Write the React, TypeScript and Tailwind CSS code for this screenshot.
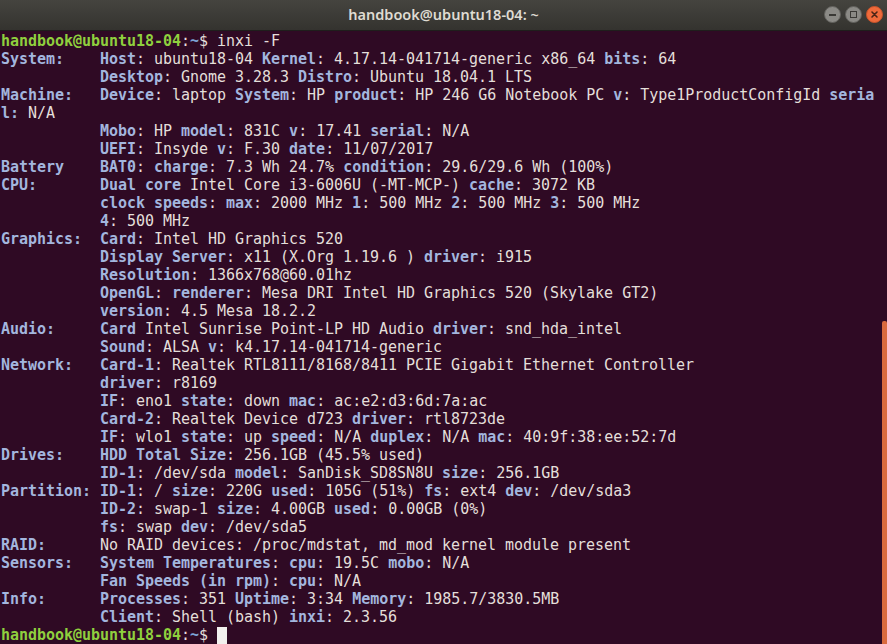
import React from 'react'

// *label* marks bold blue spans, the rest is plain output text
const LINES: string[] = [
  '*System:*    *Host:* ubuntu18-04 *Kernel:* 4.17.14-041714-generic x86_64 *bits:* 64',
  '           *Desktop:* Gnome 3.28.3 *Distro:* Ubuntu 18.04.1 LTS',
  '*Machine:*   *Device:* laptop *System:* HP *product:* HP 246 G6 Notebook PC *v:* Type1ProductConfigId *seria*',
  '*l:* N/A',
  '           *Mobo:* HP *model:* 831C *v:* 17.41 *serial:* N/A',
  '           *UEFI:* Insyde *v:* F.30 *date:* 11/07/2017',
  '*Battery*    *BAT0:* *charge:* 7.3 Wh 24.7% *condition:* 29.6/29.6 Wh (100%)',
  '*CPU:*       *Dual core* Intel Core i3-6006U (-MT-MCP-) *cache:* 3072 KB',
  '           *clock speeds:* *max:* 2000 MHz *1:* 500 MHz *2:* 500 MHz *3:* 500 MHz',
  '           *4:* 500 MHz',
  '*Graphics:*  *Card:* Intel HD Graphics 520',
  '           *Display Server:* x11 (X.Org 1.19.6 ) *driver:* i915',
  '           *Resolution:* 1366x768@60.01hz',
  '           *OpenGL:* *renderer:* Mesa DRI Intel HD Graphics 520 (Skylake GT2)',
  '           *version:* 4.5 Mesa 18.2.2',
  '*Audio:*     *Card* Intel Sunrise Point-LP HD Audio *driver:* snd_hda_intel',
  '           *Sound:* ALSA *v:* k4.17.14-041714-generic',
  '*Network:*   *Card-1:* Realtek RTL8111/8168/8411 PCIE Gigabit Ethernet Controller',
  '           *driver:* r8169',
  '           *IF:* eno1 *state:* down *mac:* ac:e2:d3:6d:7a:ac',
  '           *Card-2:* Realtek Device d723 *driver:* rtl8723de',
  '           *IF:* wlo1 *state:* up *speed:* N/A *duplex:* N/A *mac:* 40:9f:38:ee:52:7d',
  '*Drives:*    *HDD Total Size:* 256.1GB (45.5% used)',
  '           *ID-1:* /dev/sda *model:* SanDisk_SD8SN8U *size:* 256.1GB',
  '*Partition:* *ID-1:* / *size:* 220G *used:* 105G (51%) *fs:* ext4 *dev:* /dev/sda3',
  '           *ID-2:* swap-1 *size:* 4.00GB *used:* 0.00GB (0%)',
  '           *fs:* swap *dev:* /dev/sda5',
  '*RAID:*      No RAID devices: /proc/mdstat, md_mod kernel module present',
  '*Sensors:*   *System Temperatures:* *cpu:* 19.5C *mobo:* N/A',
  '           *Fan Speeds (in rpm):* *cpu:* N/A',
  '*Info:*      *Processes:* 351 *Uptime:* 3:34 *Memory:* 1985.7/3830.5MB',
  '           *Client:* Shell (bash) *inxi:* 2.3.56',
]

function Label({ text, section }: { text: string; section: boolean }) {
  // key labels draw their colon in the plain colour, section headers keep it blue
  if (!section && text.endsWith(':')) {
    return (
      <>
        <span className="font-bold text-[#a3b6de]">{text.slice(0, -1)}</span>
        <span className="text-[#e4dfda]">:</span>
      </>
    )
  }
  return <span className="font-bold text-[#a3b6de]">{text}</span>
}

function OutputLine({ line }: { line: string }) {
  const parts = line.split('*')
  return (
    <div className="h-[18px] leading-[18px] whitespace-pre">
      {parts.map((p, i) =>
        i % 2 === 1 ? (
          <Label key={i} text={p} section={i === 1 && !line.startsWith(' ')} />
        ) : (
          <span key={i} className="text-[#e4dfda]">{p}</span>
        )
      )}
    </div>
  )
}

function Prompt({ cmd, cursor }: { cmd?: string; cursor?: boolean }) {
  return (
    <div className="h-[18px] leading-[18px] whitespace-pre flex items-center">
      <span className="font-bold text-[#8fd03e]">handbook@ubuntu18-04</span>
      <span className="text-[#e4dfda]">:</span>
      <span className="font-bold text-[#7da3d6]">~</span>
      <span className="text-[#e4dfda]">$ {cmd}</span>
      {cursor && <span className="inline-block w-[10px] h-[17px] bg-[#f2f0ee]" />}
    </div>
  )
}

function WindowButton({ kind }: { kind: 'min' | 'max' | 'close' }) {
  if (kind === 'close') {
    return (
      <div className="w-[17px] h-[17px] rounded-full bg-[#ef6a3b] border border-[#c9532a] flex items-center justify-center">
        <svg width="9" height="9" viewBox="0 0 9 9">
          <path d="M2 2 L7 7 M7 2 L2 7" stroke="#4a2416" strokeWidth="1.6" strokeLinecap="round" />
        </svg>
      </div>
    )
  }
  return (
    <div className="w-[17px] h-[17px] rounded-full bg-[#8b8a86] border border-[#62615d] flex items-center justify-center">
      {kind === 'min' ? (
        <div className="w-[7px] h-[2px] bg-[#3a3936]" />
      ) : (
        <div className="w-[7px] h-[7px] border-[1.5px] border-[#3a3936]" />
      )}
    </div>
  )
}

export default function App() {
  return (
    <div className="w-[887px] h-[644px] flex flex-col overflow-hidden bg-[#2f0a24]">
      {/* Title bar */}
      <div className="h-[31px] shrink-0 relative flex items-center justify-center bg-gradient-to-b from-[#45443f] to-[#34332f] border-b border-[#1f1e1c]">
        <span className="text-[14.5px] font-semibold text-[#dfdbd2]" style={{ fontFamily: '"Noto Sans", sans-serif' }}>
          handbook@ubuntu18-04: ~
        </span>
        <div className="absolute right-[4px] top-[6px] flex gap-[4px]">
          <WindowButton kind="min" />
          <WindowButton kind="max" />
          <WindowButton kind="close" />
        </div>
      </div>

      {/* Terminal body */}
      <div className="flex-1 flex">
        <div
          className="flex-1 pl-[1px] pt-[1px] text-[15px] tracking-[-0.03px]"
          style={{ fontFamily: '"DejaVu Sans Mono", "Liberation Mono", monospace' }}
        >
          <Prompt cmd="inxi -F" />
          {LINES.map((l, i) => (
            <OutputLine key={i} line={l} />
          ))}
          <Prompt cursor />
        </div>
        <div className="w-[5px] flex flex-col">
          <div className="h-[290px]" />
          <div className="flex-1 bg-[#d96a3e] rounded-t-[2px]" />
        </div>
      </div>
    </div>
  )
}
